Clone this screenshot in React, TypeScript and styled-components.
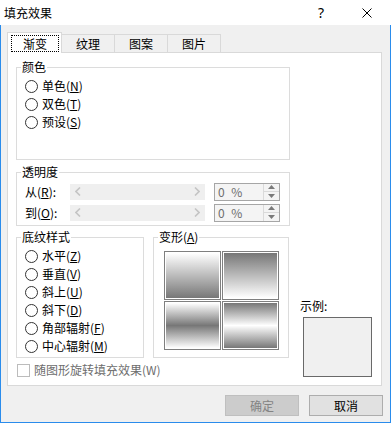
import React from "react";
import styled, { createGlobalStyle } from "styled-components";

const Global = createGlobalStyle`
  html, body { margin: 0; padding: 0; background: #fff; }
  body {
    font-family: "Noto Sans CJK SC", "Noto Sans", sans-serif;
    font-size: 12px;
    color: #000;
  }
  * { box-sizing: border-box; }
`;

const Window = styled.div`
  width: 391px;
  height: 423px;
  display: flex;
  flex-direction: column;
  overflow: hidden;
`;

const TitleBar = styled.div`
  height: 25px;
  flex: none;
  background: #fff;
  display: flex;
  align-items: center;
  padding-left: 4px;
  padding-right: 1px;
`;

const TitleText = styled.div`
  flex: 1;
  font-size: 12px;
  line-height: 16px;
`;

const CaptionButton = styled.div`
  width: 46px;
  height: 25px;
  display: flex;
  align-items: center;
  justify-content: center;
  font-family: "Noto Sans", sans-serif;
  font-size: 14px;
  color: #000;
`;

const Body = styled.div`
  flex: 1;
  background: #f0f0f0;
  border: 1px solid #2a8cec;
  border-top: none;
  padding: 7px 8px 0 6px;
  display: flex;
  flex-direction: column;
`;

const TabRow = styled.div`
  height: 20px;
  display: flex;
  align-items: flex-end;
  position: relative;
  z-index: 1;
`;

const Tab = styled.div<{ $active?: boolean }>`
  width: ${(p) => (p.$active ? 55 : 54)}px;
  height: ${(p) => (p.$active ? 21 : 18)}px;
  margin-bottom: ${(p) => (p.$active ? -1 : 0)}px;
  margin-left: ${(p) => (p.$active ? 0 : -1)}px;
  border: 1px solid #d9d9d9;
  border-bottom: none;
  background: ${(p) => (p.$active ? "#fff" : "#f0f0f0")};
  display: flex;
  align-items: ${(p) => (p.$active ? "flex-start" : "center")};
  justify-content: center;
  padding-top: ${(p) => (p.$active ? 2 : 0)}px;
  line-height: 16px;
`;

const FocusLabel = styled.div`
  width: 48px;
  height: 17px;
  margin-left: 1px;
  border: 1px dotted #000;
  display: flex;
  align-items: center;
  justify-content: center;
  line-height: 15px;
`;

const Panel = styled.div`
  height: 334px;
  flex: none;
  border: 1px solid #d9d9d9;
  background: #fff;
  padding: 6px 0 0 8px;
  display: flex;
  flex-direction: column;
  align-items: flex-start;
`;

const Group = styled.fieldset<{ $w: number; $mt?: number }>`
  margin: ${(p) => p.$mt ?? 0}px 0 0 0;
  padding: 0;
  border: 1px solid #dcdcdc;
  width: ${(p) => p.$w}px;
  min-width: 0;
  flex: none;
`;

const Legend = styled.legend`
  margin-left: 4px;
  padding: 0 1px;
  font-size: 12px;
  line-height: 16px;
  height: 16px;
`;

const GroupContent = styled.div<{ $h: number; $pt: number; $pl: number }>`
  height: ${(p) => p.$h}px;
  padding-top: ${(p) => p.$pt}px;
  padding-left: ${(p) => p.$pl}px;
  display: flex;
  flex-direction: column;
`;

const RadioRow = styled.div`
  height: 18px;
  display: flex;
  align-items: center;
  gap: 4px;
  line-height: 16px;
  white-space: nowrap;
`;

const RadioCircle = styled.span`
  width: 13px;
  height: 13px;
  border-radius: 50%;
  border: 1px solid #333;
  background: #fff;
  flex: none;
`;

const SliderRow = styled.div`
  height: 21px;
  display: flex;
  align-items: center;
`;

const SliderLabel = styled.div`
  width: 45px;
  flex: none;
  line-height: 16px;
  white-space: nowrap;
`;

const ScrollTrack = styled.div`
  width: 135px;
  height: 16px;
  flex: none;
  background: #efefef;
  display: flex;
  align-items: center;
  justify-content: space-between;
  padding: 0 5px;
`;

const Spinner = styled.div`
  width: 66px;
  height: 18px;
  flex: none;
  margin-left: 9px;
  border: 1px solid #a6a6a6;
  background: #f4f4f4;
  display: flex;
`;

const SpinValue = styled.div`
  flex: 1;
  padding-left: 3px;
  line-height: 16px;
  color: #6d6d6d;
  white-space: pre;
  word-spacing: 4px;
`;

const SpinButtons = styled.div`
  width: 16px;
  display: flex;
  flex-direction: column;
  border-left: 1px solid #dadada;
`;

const SpinBtn = styled.div<{ $top?: boolean }>`
  flex: 1;
  display: flex;
  align-items: center;
  justify-content: center;
  border-bottom: ${(p) => (p.$top ? "1px solid #dadada" : "none")};
`;

const BottomArea = styled.div`
  display: flex;
  margin-top: 3px;
`;

const LeftCol = styled.div`
  display: flex;
  flex-direction: column;
`;

const FramesRow = styled.div`
  display: flex;
  gap: 9px;
  align-items: flex-start;
`;

const SwatchGrid = styled.div`
  display: grid;
  grid-template-columns: 57px 57px;
  grid-template-rows: 49px 49px;
  gap: 1px;
`;

const Swatch = styled.div<{ $g: string }>`
  border: 1px solid #7f7f7f;
  padding: 1px;
  background: ${(p) => p.$g} content-box, #fff;
`;

const CheckRow = styled.div`
  height: 18px;
  margin-top: 3px;
  padding-left: 1px;
  display: flex;
  align-items: center;
  gap: 4px;
  color: #6d6d6d;
  line-height: 16px;
  white-space: nowrap;
`;

const CheckBox = styled.span`
  width: 13px;
  height: 13px;
  border: 1px solid #bcbcbc;
  background: #fff;
  flex: none;
`;

const SampleCol = styled.div`
  margin-left: 11px;
  display: flex;
  flex-direction: column;
  justify-content: flex-end;
  padding-bottom: 2px;
`;

const SampleLabel = styled.div`
  line-height: 16px;
  margin-bottom: 3px;
`;

const SampleBox = styled.div`
  width: 69px;
  height: 60px;
  margin-left: 3px;
  border: 1px solid #696969;
  background: #f0f0f0;
`;

const ButtonRow = styled.div`
  margin-top: 9px;
  margin-right: -1px;
  display: flex;
  justify-content: flex-end;
  gap: 10px;
`;

const Button = styled.div<{ $disabled?: boolean }>`
  width: 74px;
  height: 21px;
  display: flex;
  align-items: center;
  justify-content: center;
  border: 1px solid ${(p) => (p.$disabled ? "#bfbfbf" : "#adadad")};
  background: ${(p) => (p.$disabled ? "#cccccc" : "#e1e1e1")};
  color: ${(p) => (p.$disabled ? "#838383" : "#000")};
  line-height: 16px;
`;

const Mn = styled.span`
  text-decoration: underline;
`;

const Radio = ({ text, k }: { text: string; k: string }) => (
  <RadioRow>
    <RadioCircle />
    <span>
      {text}(<Mn>{k}</Mn>)
    </span>
  </RadioRow>
);

const Chevron = ({ dir }: { dir: "l" | "r" }) => (
  <svg width="6" height="9" viewBox="0 0 6 9">
    <polyline
      points={dir === "l" ? "5,0.5 1,4.5 5,8.5" : "1,0.5 5,4.5 1,8.5"}
      fill="none"
      stroke="#c4c4c4"
      strokeWidth="1.6"
    />
  </svg>
);

const Tri = ({ up }: { up?: boolean }) => (
  <svg width="7" height="4" viewBox="0 0 7 4">
    <polygon points={up ? "3.5,0 7,4 0,4" : "0,0 7,0 3.5,4"} fill="#7a7a7a" />
  </svg>
);

const SliderLine = ({ label, k }: { label: string; k: string }) => (
  <SliderRow>
    <SliderLabel>
      {label}(<Mn>{k}</Mn>):
    </SliderLabel>
    <ScrollTrack>
      <Chevron dir="l" />
      <Chevron dir="r" />
    </ScrollTrack>
    <Spinner>
      <SpinValue>0 %</SpinValue>
      <SpinButtons>
        <SpinBtn $top>
          <Tri up />
        </SpinBtn>
        <SpinBtn>
          <Tri />
        </SpinBtn>
      </SpinButtons>
    </Spinner>
  </SliderRow>
);

const DARK = "#777777";
const gradients = [
  `linear-gradient(to bottom, #ffffff 0%, ${DARK} 100%)`,
  `linear-gradient(to bottom, ${DARK} 0%, #ffffff 100%)`,
  `linear-gradient(to bottom, #ffffff 0%, ${DARK} 50%, #ffffff 100%)`,
  `linear-gradient(to bottom, ${DARK} 0%, #ffffff 50%, ${DARK} 100%)`,
];

export default function App() {
  return (
    <>
      <Global />
      <Window>
        <TitleBar>
          <TitleText>填充效果</TitleText>
          <CaptionButton>?</CaptionButton>
          <CaptionButton>
            <svg width="10" height="10" viewBox="0 0 10 10">
              <path d="M0.5 0.5 L9.5 9.5 M9.5 0.5 L0.5 9.5" stroke="#000" strokeWidth="1" />
            </svg>
          </CaptionButton>
        </TitleBar>
        <Body>
          <TabRow>
            <Tab $active>
              <FocusLabel>渐变</FocusLabel>
            </Tab>
            <Tab>纹理</Tab>
            <Tab>图案</Tab>
            <Tab>图片</Tab>
          </TabRow>
          <Panel>
            <Group $w={274}>
              <Legend>颜色</Legend>
              <GroupContent $h={84} $pt={2} $pl={8}>
                <Radio text="单色" k="N" />
                <Radio text="双色" k="T" />
                <Radio text="预设" k="S" />
              </GroupContent>
            </Group>
            <Group $w={274} $mt={4}>
              <Legend>透明度</Legend>
              <GroupContent $h={45} $pt={1} $pl={8}>
                <SliderLine label="从" k="R" />
                <SliderLine label="到" k="O" />
              </GroupContent>
            </Group>
            <BottomArea>
              <LeftCol>
                <FramesRow>
                  <Group $w={128}>
                    <Legend>底纹样式</Legend>
                    <GroupContent $h={112} $pt={2} $pl={8}>
                      <Radio text="水平" k="Z" />
                      <Radio text="垂直" k="V" />
                      <Radio text="斜上" k="U" />
                      <Radio text="斜下" k="D" />
                      <Radio text="角部辐射" k="F" />
                      <Radio text="中心辐射" k="M" />
                    </GroupContent>
                  </Group>
                  <Group $w={136}>
                    <Legend>
                      变形(<Mn>A</Mn>)
                    </Legend>
                    <GroupContent $h={112} $pt={6} $pl={10}>
                      <SwatchGrid>
                        {gradients.map((g, i) => (
                          <Swatch key={i} $g={g} />
                        ))}
                      </SwatchGrid>
                    </GroupContent>
                  </Group>
                </FramesRow>
                <CheckRow>
                  <CheckBox />
                  <span>随图形旋转填充效果(W)</span>
                </CheckRow>
              </LeftCol>
              <SampleCol>
                <SampleLabel>示例:</SampleLabel>
                <SampleBox />
              </SampleCol>
            </BottomArea>
          </Panel>
          <ButtonRow>
            <Button $disabled>确定</Button>
            <Button>取消</Button>
          </ButtonRow>
        </Body>
      </Window>
    </>
  );
}
